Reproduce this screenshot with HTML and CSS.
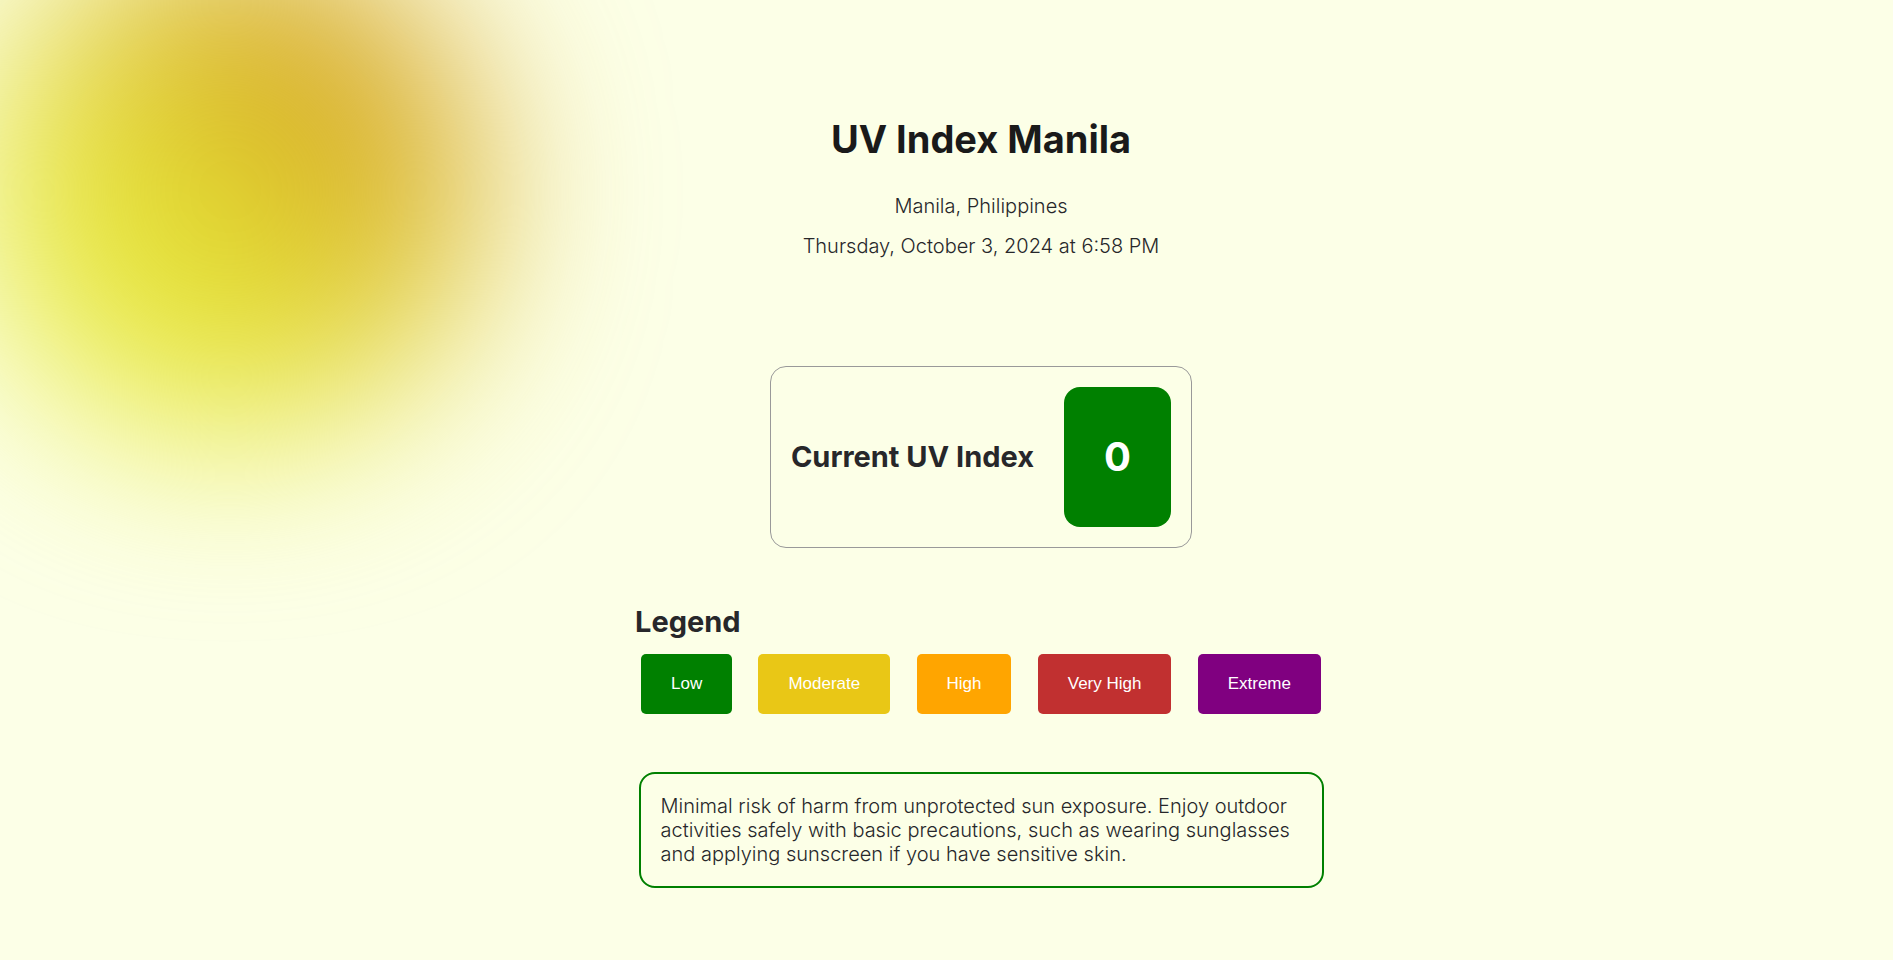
FILE: index.html
```html
<!DOCTYPE html>
<html lang="en">
<head>
<meta charset="utf-8">
<meta name="viewport" content="width=device-width, initial-scale=1">
<title>UV Index Manila</title>
<link rel="stylesheet" href="styles.css">
</head>
<body>
<div class="sun" aria-hidden="true"></div>
<main class="page">
<header class="intro">
<h1 class="title">UV Index Manila</h1>
<p class="meta">Manila, Philippines</p>
<p class="meta">Thursday, October 3, 2024 at 6:58 PM</p>
</header>
<section class="current">
<h2 class="heading">Current UV Index</h2>
<div class="value">0</div>
</section>
<section class="legend">
<h2 class="heading">Legend</h2>
<div class="levels">
<button type="button" class="level low">Low</button>
<button type="button" class="level moderate">Moderate</button>
<button type="button" class="level high">High</button>
<button type="button" class="level very-high">Very High</button>
<button type="button" class="level extreme">Extreme</button>
</div>
</section>
<p class="advice">Minimal risk of harm from unprotected sun exposure. Enjoy outdoor activities safely with basic precautions, such as wearing sunglasses and applying sunscreen if you have sensitive skin.</p>
</main>
</body>
</html>
```
FILE: styles.css
```css
* { box-sizing: border-box; }
body {
  margin: 0;
  padding-left: 69px;
  min-height: 100vh;
  background: #fcffe7;
  color: #27272a;
  font-family: Inter, sans-serif;
  font-size: 20px;
  line-height: 24px;
}
.sun {
  position: absolute;
  left: -20px;
  top: -60px;
  width: 500px;
  height: 500px;
  border-radius: 50%;
  background: linear-gradient(45deg, #e6e83a 36%, #d4a020 76%);
  filter: blur(88px);
}
.page {
  position: relative;
  display: flex;
  flex-direction: column;
  align-items: center;
  max-width: 692px;
  margin: 0 auto;
  padding-top: 112px;
}
.intro { text-align: center; }
.title { margin: 0 0 28px; color: #1a1a1a; font-size: 38px; line-height: 54px; font-weight: 700; }
.meta { margin: 0 0 16px; font-weight: 300; }
.heading { margin: 0; font-size: 29px; line-height: 36px; font-weight: 700; }
.current {
  display: flex;
  align-items: center;
  gap: 30px;
  margin-top: 92px;
  padding: 20px;
  border: 1px solid #999;
  border-radius: 16px;
}
.value {
  padding: 40px;
  border-radius: 16px;
  background: #008000;
  color: #fff;
  font-size: 40px;
  line-height: 60px;
  font-weight: 700;
}
.legend { width: 100%; margin-top: 56px; }
.levels { display: flex; justify-content: space-between; gap: 8px; padding: 14px 6px 0; }
.level {
  height: 60px;
  padding: 0 30px;
  border: 0;
  border-radius: 5px;
  color: #fff;
  font: 17px "Liberation Sans", sans-serif;
}
.low { background: #008000; }
.moderate { background: #e9c716; }
.high { background: #ffa500; }
.very-high { background: #c13030; }
.extreme { background: #800080; }
.advice {
  max-width: 685px;
  margin: 58px 0 0;
  padding: 20px;
  border: 2px solid #008000;
  border-radius: 16px;
  font-weight: 300;
}
```
